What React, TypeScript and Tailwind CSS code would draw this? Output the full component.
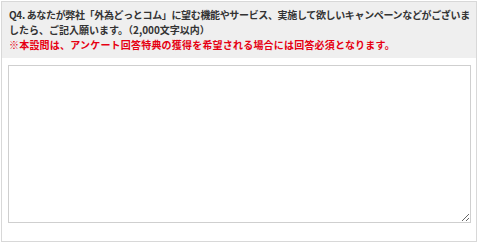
export default function App() {
  return (
    <div className="w-[478px] h-[244px] bg-white p-px">
      <div
        className="h-[241px] w-[476px] border border-[#d8d8d8] flex flex-col"
        style={{ fontFamily: '"Noto Sans CJK JP", "Noto Sans", sans-serif' }}
      >
        <div className="h-[56px] bg-[#efefef] px-[7px] pt-[5px] text-[10px] leading-[15px] font-bold text-[#333]">
          <p className="whitespace-nowrap">
            <span className="tracking-[-0.35px]">
              Q4. あなたが弊社「外為どっとコム」に望む機能やサービス、実施して欲しいキャンペーンなどがございま
            </span>
            <br />
            したら、ご記入願います。（2,000文字以内）
          </p>
          <p className="text-[#e60012] tracking-[0.2px]">
            ※本設問は、アンケート回答特典の獲得を希望される場合には回答必須となります。
          </p>
        </div>
        <div className="px-[6px] pt-[7px]">
          <textarea className="block w-[463px] h-[158px] border border-[#cfcfcf] bg-white resize-y" />
        </div>
      </div>
    </div>
  );
}
